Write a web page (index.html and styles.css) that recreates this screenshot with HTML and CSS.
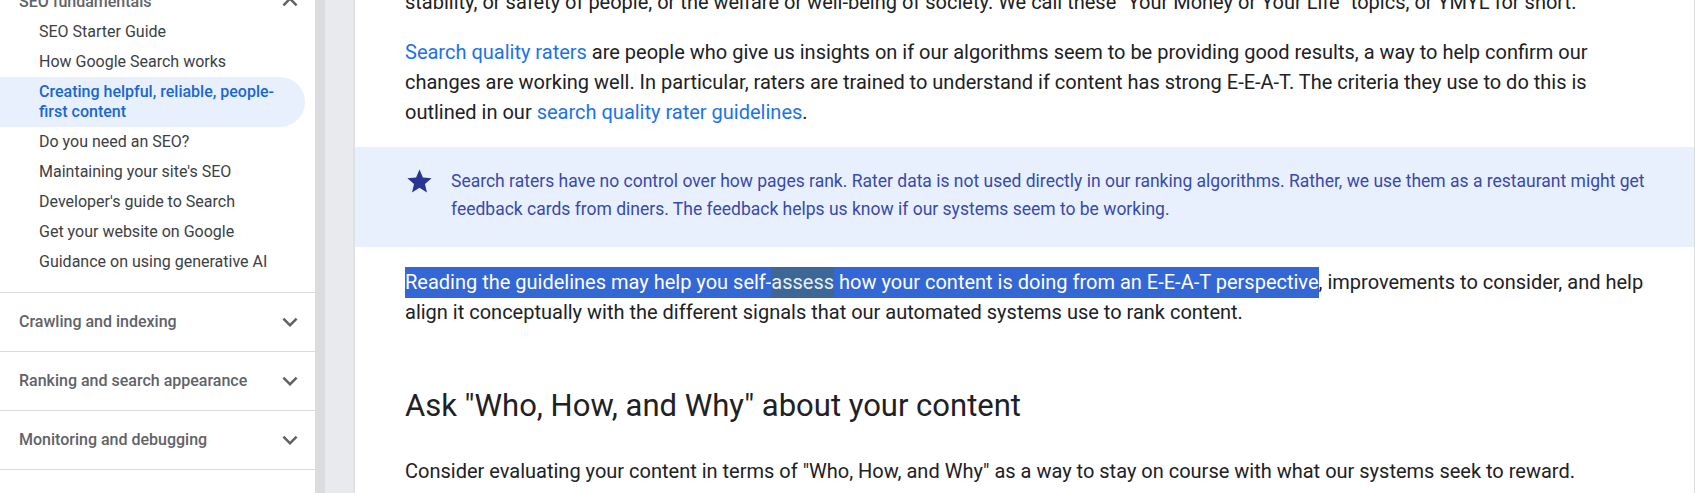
FILE: index.html
```html
<!DOCTYPE html>
<html lang="en">
<head>
<meta charset="utf-8">
<title>Creating helpful, reliable, people-first content</title>
<link rel="stylesheet" href="styles.css">
</head>
<body>
<div class="layout">
  <nav class="sidebar">
    <div class="sidebar-inner">
      <div class="group group-open">
        <div class="group-head group-head-open">
          <span>SEO fundamentals</span>
          <svg class="chev" viewBox="0 0 24 24" width="30" height="30"><path d="M7.41 15.41L12 10.83l4.59 4.58L18 14l-6-6-6 6z"/></svg>
        </div>
        <ul class="items">
          <li class="item">SEO Starter Guide</li>
          <li class="item">How Google Search works</li>
          <li class="item item-active">Creating helpful, reliable, people-first content</li>
          <li class="item">Do you need an SEO?</li>
          <li class="item">Maintaining your site's SEO</li>
          <li class="item">Developer's guide to Search</li>
          <li class="item">Get your website on Google</li>
          <li class="item">Guidance on using generative AI</li>
        </ul>
      </div>
      <div class="group">
        <div class="group-head">
          <span>Crawling and indexing</span>
          <svg class="chev" viewBox="0 0 24 24" width="30" height="30"><path d="M16.59 8.59L12 13.17 7.41 8.59 6 10l6 6 6-6z"/></svg>
        </div>
      </div>
      <div class="group">
        <div class="group-head">
          <span>Ranking and search appearance</span>
          <svg class="chev" viewBox="0 0 24 24" width="30" height="30"><path d="M16.59 8.59L12 13.17 7.41 8.59 6 10l6 6 6-6z"/></svg>
        </div>
      </div>
      <div class="group">
        <div class="group-head">
          <span>Monitoring and debugging</span>
          <svg class="chev" viewBox="0 0 24 24" width="30" height="30"><path d="M16.59 8.59L12 13.17 7.41 8.59 6 10l6 6 6-6z"/></svg>
        </div>
      </div>
    </div>
  </nav>
  <div class="gutter"></div>
  <main class="article">
    <p class="para para-first">stability, or safety of people, or the welfare or well-being of society. We call these "Your Money or Your Life" topics, or YMYL for short.</p>
    <p class="para"><a class="link" href="#">Search quality raters</a> are people who give us insights on if our algorithms seem to be providing good results, a way to help confirm our changes are working well. In particular, raters are trained to understand if content has strong E-E-A-T. The criteria they use to do this is outlined in our <a class="link" href="#">search quality rater guidelines</a>.</p>
    <aside class="note">
      <svg class="star" viewBox="0 0 24 24" width="29" height="29"><path d="M12 17.27L18.18 21l-1.64-7.03L22 9.24l-7.19-.61L12 2 9.19 8.63 2 9.24l5.46 4.73L5.82 21z"/></svg>
      <div class="note-text">Search raters have no control over how pages rank. Rater data is not used directly in our ranking algorithms. Rather, we use them as a restaurant might get feedback cards from diners. The feedback helps us know if our systems seem to be working.</div>
    </aside>
    <p class="para"><span class="sel">Reading the guidelines may help you self-<span class="sel-match">assess</span> how your content is doing from an E-E-A-T perspective</span>, improvements to consider, and help align it conceptually with the different signals that our automated systems use to rank content.</p>
    <h2 class="heading">Ask "Who, How, and Why" about your content</h2>
    <p class="para">Consider evaluating your content in terms of "Who, How, and Why" as a way to stay on course with what our systems seek to reward.</p>
  </main>
</div>
</body>
</html>
```

FILE: styles.css
```css
html, body {
  margin: 0;
  padding: 0;
  background: #ffffff;
}

body {
  font-family: Roboto, "Liberation Sans", Arial, sans-serif;
  color: #202124;
}

.layout {
  display: flex;
  height: 493px;
  overflow: hidden;
}

/* ---------- Sidebar ---------- */
.sidebar {
  width: 315px;
  flex: 0 0 315px;
  background: #ffffff;
  overflow: hidden;
}

.sidebar-inner {
  margin-top: -27px;
}

.group {
  border-bottom: 1px solid #dadce0;
}

.group-open {
  padding-bottom: 15px;
}

.group-head {
  display: flex;
  align-items: center;
  justify-content: space-between;
  padding: 19px 10px 19px 19px;
  font-size: 16px;
  line-height: 20px;
  font-weight: 500;
  color: #5f6368;
}

.group-head-open {
  padding-bottom: 5px;
}

.chev {
  display: block;
  margin: -5px 0;
  fill: #5f6368;
}

.items {
  list-style: none;
  margin: 0;
  padding: 0;
}

.item {
  padding: 5px 16px 5px 39px;
  font-size: 16px;
  line-height: 20px;
  color: #3c4043;
  width: 250px;
}

.item-active {
  background: #e8f0fe;
  color: #1967d2;
  font-weight: 500;
  border-radius: 0 25px 25px 0;
}

/* ---------- Gutter ---------- */
.gutter {
  width: 28px;
  flex: 0 0 28px;
  border-left: 10px solid #dcdcde;
  border-right: 2px solid #dfe1e4;
  background: #e8eaed;
}

/* ---------- Article ---------- */
.article {
  flex: 1;
  min-width: 0;
  border-right: 1px solid #dadce0;
  font-size: 20px;
  line-height: 30px;
  color: #202124;
}

.para {
  margin: 0 49px 20px 50px;
}

.para-first {
  margin-top: -13px;
}

.link {
  color: #1a73e8;
  text-decoration: none;
}

.note {
  display: flex;
  align-items: flex-start;
  gap: 17px;
  margin: 0 0 20px;
  padding: 20px 40px 24px 50px;
  background: #e8f0fe;
  color: #3949ab;
  font-size: 17.5px;
  line-height: 28px;
}

.star {
  flex: 0 0 29px;
  display: block;
  fill: #283593;
}

.note-text {
  flex: 1;
}

.sel {
  background: #3367d6;
  color: #ffffff;
  padding: 3px 0 4px;
}

.sel-match {
  background: #3d6797;
  color: #e8f0fe;
  padding: 3px 0 4px;
}

.heading {
  margin: 59px 50px 30px;
  font-size: 31px;
  line-height: 40px;
  font-weight: 400;
  color: #202124;
}
```
